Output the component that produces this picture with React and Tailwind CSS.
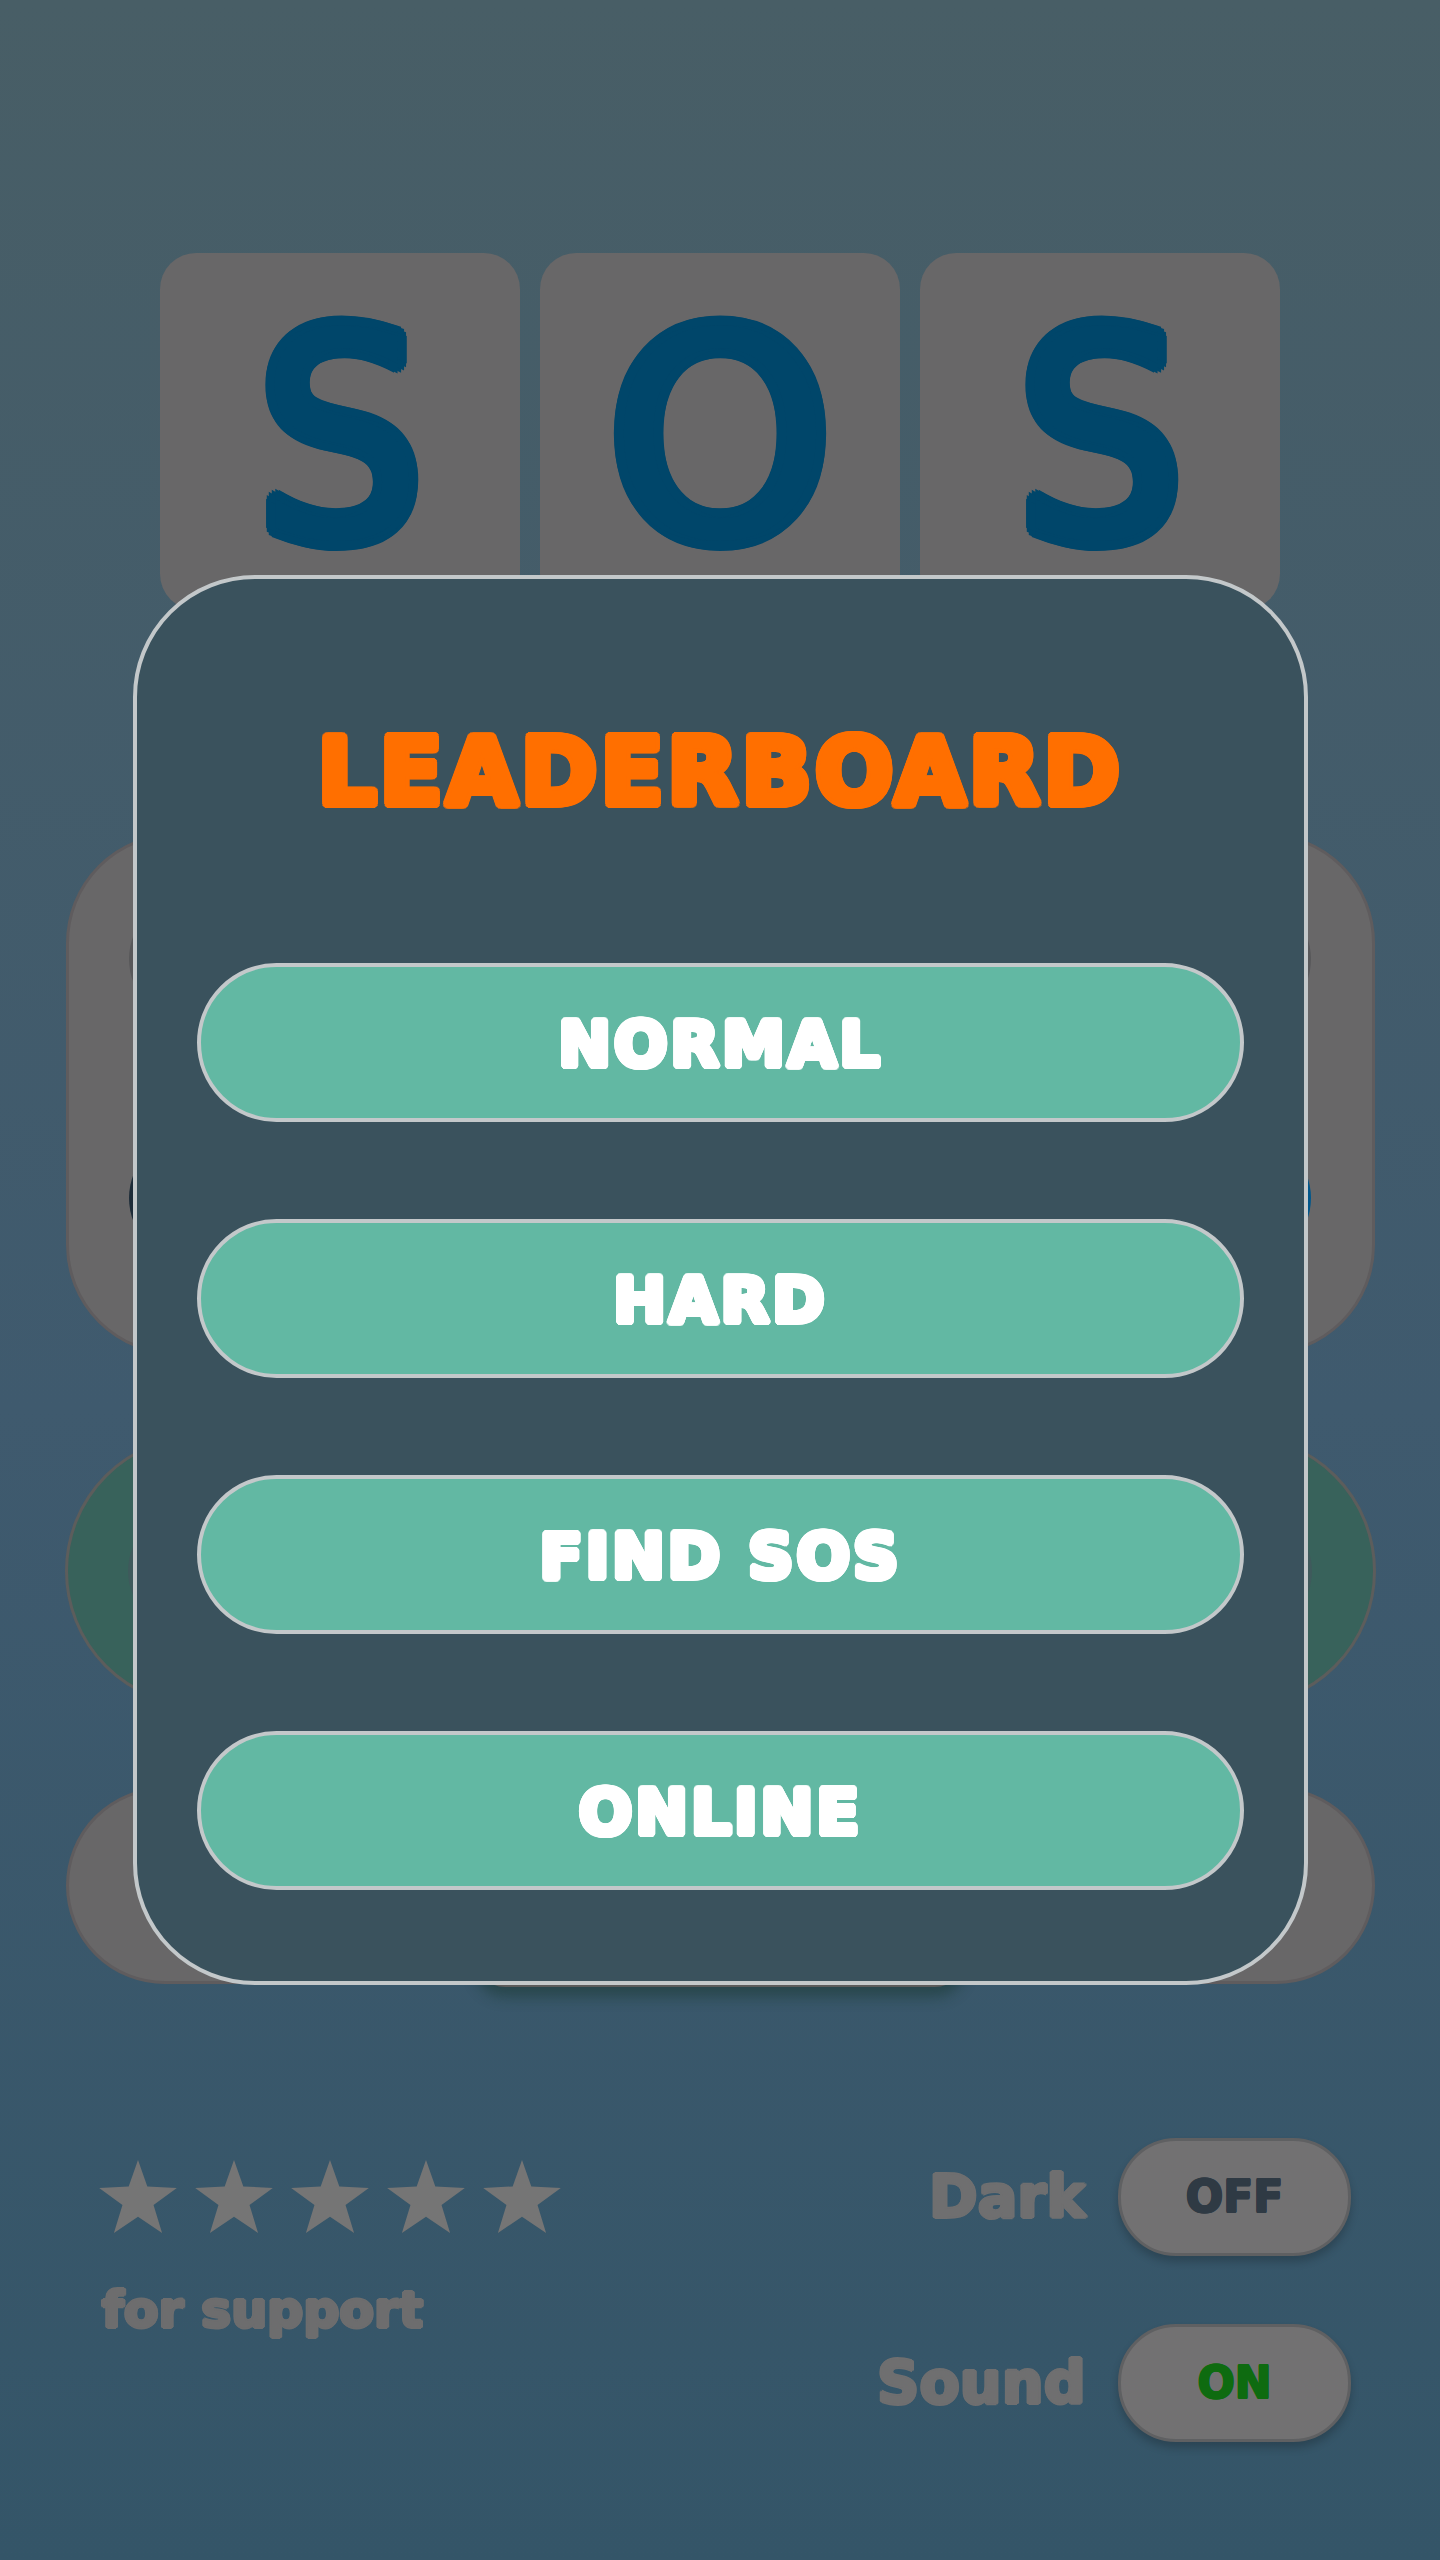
// the game font is fat and rounded: thicken DejaVu with a ring of hard text shadows
const puff1 = "[text-shadow:1px_0,-1px_0,0_1px,0_-1px,0.7px_0.7px,-0.7px_0.7px,0.7px_-0.7px,-0.7px_-0.7px]";
const puff2 = "[text-shadow:2px_0,-2px_0,0_2px,0_-2px,1.41px_1.41px,-1.41px_1.41px,1.41px_-1.41px,-1.41px_-1.41px]";
const puff3 = "[text-shadow:3px_0,-3px_0,0_3px,0_-3px,2.12px_2.12px,-2.12px_2.12px,2.12px_-2.12px,-2.12px_-2.12px,2.77px_1.15px,-2.77px_1.15px,2.77px_-1.15px,-2.77px_-1.15px,1.15px_2.77px,-1.15px_2.77px,1.15px_-2.77px,-1.15px_-2.77px]";
const puff4 = "[text-shadow:4px_0,-4px_0,0_4px,0_-4px,2.83px_2.83px,-2.83px_2.83px,2.83px_-2.83px,-2.83px_-2.83px,3.7px_1.53px,-3.7px_1.53px,3.7px_-1.53px,-3.7px_-1.53px,1.53px_3.7px,-1.53px_3.7px,1.53px_-3.7px,-1.53px_-3.7px]";
const puff10 = "[text-shadow:10px_0,-10px_0,0_10px,0_-10px,7.07px_7.07px,-7.07px_7.07px,7.07px_-7.07px,-7.07px_-7.07px,9.24px_3.83px,-9.24px_3.83px,9.24px_-3.83px,-9.24px_-3.83px,3.83px_9.24px,-3.83px_9.24px,3.83px_-9.24px,-3.83px_-9.24px,5px_5px,-5px_5px,5px_-5px,-5px_-5px]";

const Tile = ({ letter, narrow }) => (
  <div className="w-[360px] h-[357px] rounded-[36px] bg-[#686768] flex items-center justify-center pt-[14px]">
    <span className={`inline-block ${narrow ? "scale-x-[0.92]" : ""} text-[#00466a] text-[285px] leading-none [font-family:'DejaVu_Sans',sans-serif] ${puff10}`}>
      {letter}
    </span>
  </div>
);

const Star = () => (
  <svg viewBox="0 0 100 94" className="w-[78px] h-[73px] fill-[#757575]">
    <polygon points="50,0 62,34 100,36 70,58 81,94 50,73 19,94 30,58 0,36 38,34" />
  </svg>
);

const Toggle = ({ label, value, valueColor }) => (
  <div className="flex items-center justify-end gap-[32px]">
    <span className={`text-[58px] leading-none font-bold tracking-[0.6px] text-[#6f6f70] [font-family:'DejaVu_Sans',sans-serif] ${puff2}`}>
      {label}
    </span>
    <div className="w-[233px] h-[118px] rounded-[58px] bg-[#727172] border-[3px] border-[#5f6062] shadow-[0_6px_8px_rgba(0,0,0,0.2)] flex items-center justify-center">
      <span className={`text-[44px] leading-none font-bold [font-family:'DejaVu_Sans',sans-serif] ${valueColor} ${puff1}`}>{value}</span>
    </div>
  </div>
);

const MenuButton = ({ children }) => (
  <button className="h-[159px] w-full rounded-full bg-[#62b8a3] border-[4px] border-[#c3c8ca] flex items-center justify-center pt-[3px]">
    <span className={`text-white text-[63px] leading-none font-bold tracking-[3px] [font-family:'DejaVu_Sans',sans-serif] ${puff3}`}>
      {children}
    </span>
  </button>
);

export default function App() {
  return (
    <div className="relative w-[1440px] h-[2560px] overflow-hidden bg-gradient-to-b from-[#485e66] via-[#3f5a6e] via-55% to-[#345568]">
      {/* game menu behind the dialog */}
      <div className="flex flex-col items-center pt-[253px]">
        <div className="flex gap-[20px]">
          <Tile letter="S" narrow />
          <Tile letter="O" />
          <Tile letter="S" narrow />
        </div>

        <div className="mt-[223px] w-[1309px] h-[522px] rounded-[110px] bg-[#686768] border-[3px] border-[#5f5c5e] flex flex-col items-center pt-[58px] gap-[109px]">
          <div className="w-[1182px] h-[130px] rounded-full bg-[#58585a]" />
          <div className="w-[1182px] h-[130px] rounded-full bg-gradient-to-r from-[#1d2c38] to-[#00568a]" />
        </div>

        <div className="mt-[80px] w-[1311px] h-[272px] rounded-full bg-[#38625b] border-[3px] border-[#5c5d5c] flex items-center justify-center">
          <div className="w-[1184px] h-[120px] rounded-full bg-[#3f5a5c]" />
        </div>

        <div className="mt-[80px] w-[1309px] h-[197px] rounded-full bg-[#686768] border-[3px] border-[#5f5c5e] flex items-end justify-center">
          <div className="w-[490px] h-[100px] -mb-[6px] rounded-[30px] bg-[#5b5b5b] shadow-[0_10px_14px_rgba(20,50,40,0.45)]" />
        </div>

        <div className="mt-[154px] w-full flex justify-between pl-[99px] pr-[89px]">
          <div className="pt-[22px]">
            <div className="flex gap-[18px]">
              <Star />
              <Star />
              <Star />
              <Star />
              <Star />
            </div>
            <p className={`ml-[3px] mt-[52px] text-[50px] leading-none font-bold tracking-[0.3px] text-[#6d6d6e] [font-family:'DejaVu_Sans',sans-serif] ${puff2}`}>
              for support
            </p>
          </div>
          <div className="flex flex-col gap-[68px]">
            <Toggle label="Dark" value="OFF" valueColor="text-[#2f3a44]" />
            <Toggle label="Sound" value="ON" valueColor="text-[#0e6b10]" />
          </div>
        </div>
      </div>

      {/* leaderboard dialog */}
      <div className="absolute left-[133px] top-[575px] w-[1175px] h-[1410px] rounded-[122px] bg-[#3a525d] border-[4px] border-[#c3c8ca] px-[60px]">
        <h1 className={`mt-[154px] text-center text-[#ff6f00] text-[92px] leading-[80px] font-bold tracking-[3.5px] [font-family:'DejaVu_Sans',sans-serif] ${puff4}`}>
          LEADERBOARD
        </h1>
        <div className="mt-[150px] flex flex-col gap-[97px]">
          <MenuButton>NORMAL</MenuButton>
          <MenuButton>HARD</MenuButton>
          <MenuButton>FIND SOS</MenuButton>
          <MenuButton>ONLINE</MenuButton>
        </div>
      </div>
    </div>
  );
}
